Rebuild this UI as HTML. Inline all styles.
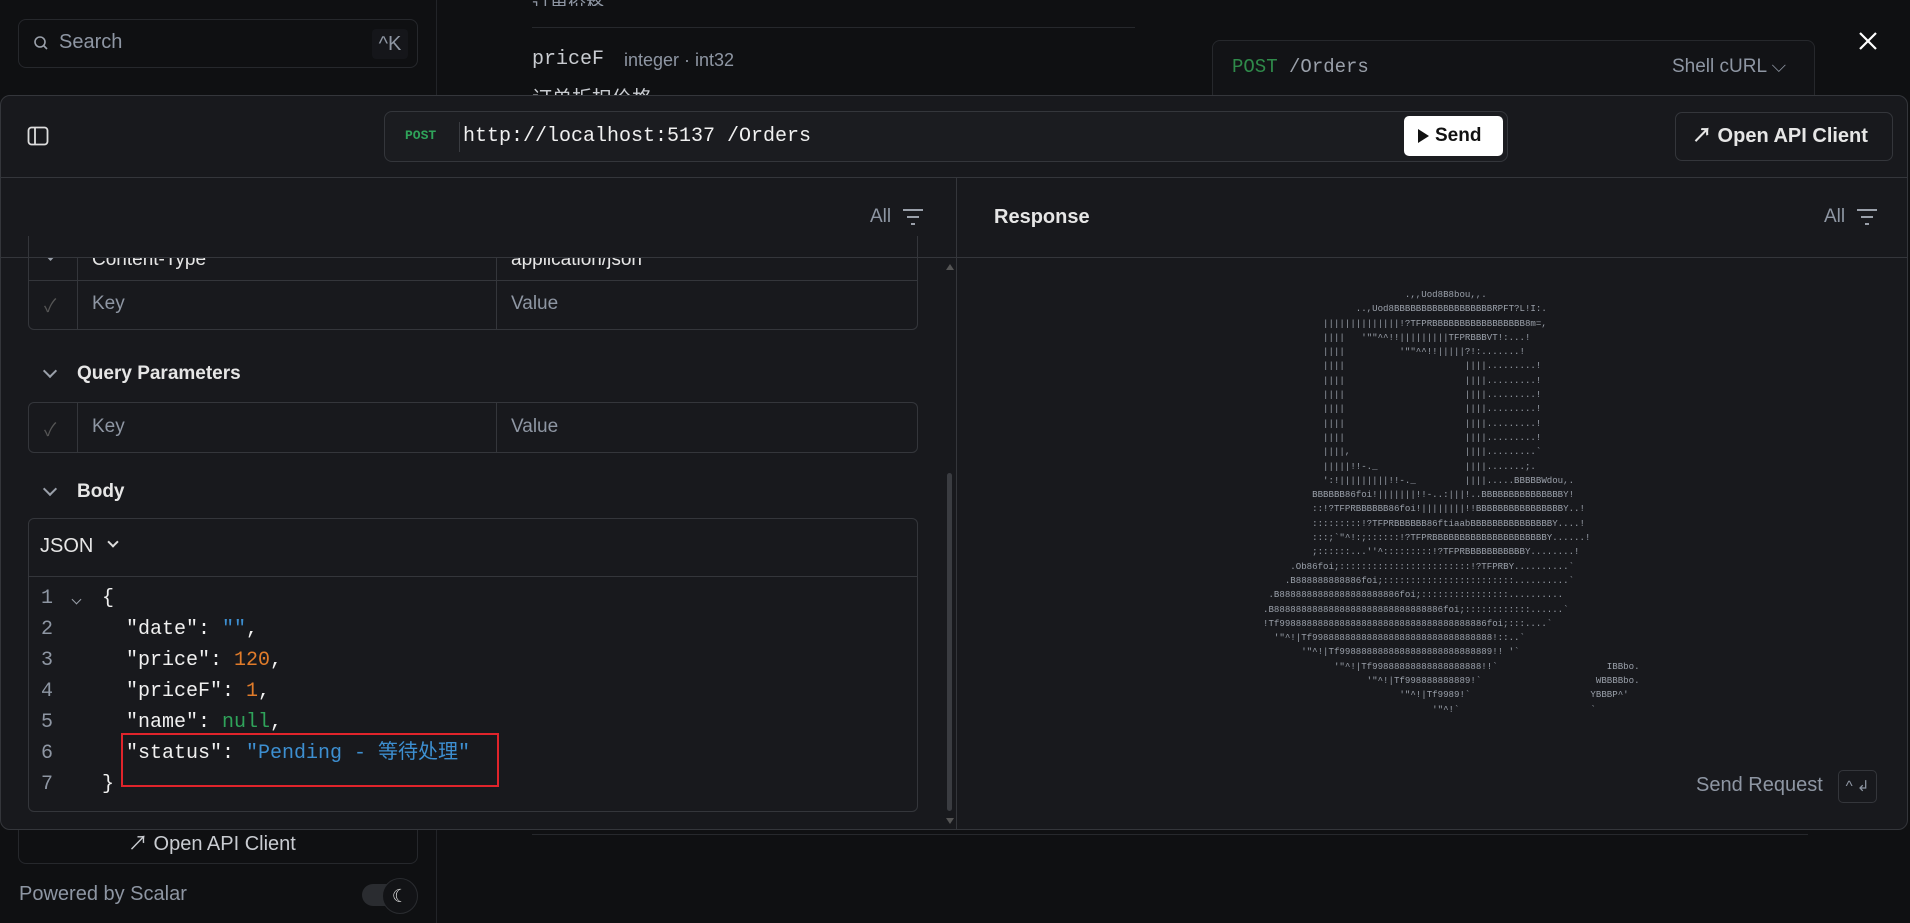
<!DOCTYPE html>
<html><head><meta charset="utf-8">
<style>
*{box-sizing:border-box;margin:0;padding:0}
body{width:1910px;height:923px;overflow:hidden;background:#0f1012;font-family:"Liberation Sans","Noto Sans CJK SC",sans-serif;color:#e6e6e6;position:relative}
.a{position:absolute}
.mono{font-family:"Liberation Mono","Noto Sans CJK SC",monospace}
.mut{color:#8e96a3}
.modal{left:0;top:95px;width:1908px;height:735px;background:#18191d;border:1px solid #34363b;border-radius:10px;overflow:hidden}
.tbl{border:1px solid #34363b;border-radius:6px}
.chev{width:10px;height:10px;border-right:2px solid #9aa0aa;border-bottom:2px solid #9aa0aa;transform:rotate(45deg)}
.code div{height:31px;line-height:31px;white-space:pre}
pre.art{font-family:"Liberation Mono",monospace;font-size:9.1px;line-height:14.3px;color:#9aa0aa}
</style></head><body>

<div class="a" style="left:0;top:0;width:437px;height:923px;border-right:1px solid #222428;background:#0f1012"></div>
<div class="a" style="left:18px;top:19px;width:400px;height:49px;border:1px solid #26282c;border-radius:8px"></div>
<svg class="a" style="left:33px;top:35px" width="16" height="16" viewBox="0 0 16 16"><circle cx="7" cy="7" r="5" fill="none" stroke="#9aa0aa" stroke-width="1.6"/><path d="M11 11l3 3" stroke="#9aa0aa" stroke-width="1.6"/></svg>
<div class="a mut" style="left:59px;top:31px;font-size:20px">Search</div>
<div class="a mut" style="left:372px;top:29px;width:36px;height:30px;background:#15161a;border-radius:4px;font-size:20px;text-align:center;line-height:30px">^K</div>
<div class="a" style="left:532px;top:27px;width:603px;height:1px;background:#26282c"></div>
<div class="a" style="left:532px;top:0;font-size:18px;color:#8e96a3;line-height:10px;height:6px;overflow:hidden">订单价格</div>
<div class="a mono" style="left:532px;top:48px;font-size:20px;color:#c9ccd1">priceF</div>
<div class="a mut" style="left:624px;top:50px;font-size:18px">integer · int32</div>
<div class="a" style="left:532px;top:82px;font-size:20px;color:#c9ccd1">订单折扣价格</div>
<div class="a" style="left:1212px;top:40px;width:603px;height:80px;border:1px solid #26282c;border-radius:8px;background:#121316"></div>
<div class="a mono" style="left:1232px;top:56px;font-size:19px"><span style="color:#2f8a4a">POST</span> <span style="color:#9aa0aa">/Orders</span></div>
<div class="a mut" style="left:1672px;top:56px;font-size:19px">Shell cURL ⌵</div>
<svg class="a" style="left:1857px;top:30px" width="22" height="22" viewBox="0 0 22 22"><path d="M3 3L19 19M19 3L3 19" stroke="#fff" stroke-width="2.2"/></svg>

<div class="a" style="left:18px;top:829px;width:400px;height:35px;border:1px solid #26282c;border-top:none;border-radius:0 0 8px 8px"></div>
<div class="a" style="left:128px;top:827px;font-size:20px;color:#c9ccd1">↗ Open API Client</div>
<div class="a mut" style="left:19px;top:883px;font-size:20px">Powered by Scalar</div>
<div class="a" style="left:362px;top:884px;width:40px;height:22px;background:#2a2c30;border-radius:11px"></div>
<div class="a" style="left:382px;top:878px;width:36px;height:36px;background:#121316;border:1px solid #2a2c30;border-radius:50%;color:#ddd;font-size:18px;text-align:center;line-height:34px">☾</div>
<div class="a" style="left:532px;top:834px;width:1276px;height:1px;background:#26282c"></div>

<div class="a modal">
 <svg class="a" style="left:26px;top:30px" width="22" height="20" viewBox="0 0 22 20"><rect x="1.5" y="1.5" width="19" height="17" rx="3" fill="none" stroke="#ddd" stroke-width="1.8"/><path d="M8 2v16" stroke="#ddd" stroke-width="1.8"/></svg>
 <div class="a" style="left:383px;top:15px;width:1124px;height:51px;border:1px solid #34363b;border-radius:8px;background:#1b1c20"></div>
 <div class="a mono" style="left:404px;top:32px;font-size:13px;font-weight:bold;color:#2fa35a">POST</div>
 <div class="a" style="left:458px;top:26px;width:1px;height:30px;background:#3a3c41"></div>
 <div class="a mono" style="left:462px;top:29px;font-size:20px;color:#f0f0f0">http://localhost:5137 /Orders</div>
 <div class="a" style="left:1403px;top:20px;width:99px;height:40px;background:#fff;border-radius:5px;color:#111;font-size:19px;font-weight:bold;line-height:40px"><span style="position:absolute;left:14px;top:13px;width:0;height:0;border-left:11px solid #111;border-top:7px solid transparent;border-bottom:7px solid transparent"></span><span style="position:absolute;left:31px">Send</span></div>
 <div class="a" style="left:1674px;top:16px;width:218px;height:49px;border:1px solid #34363b;border-radius:7px;font-size:20px;font-weight:bold;line-height:47px;padding-left:16px">↗ Open API Client</div>
 <div class="a" style="left:0;top:81px;width:1908px;height:1px;background:#34363b"></div>
 <div class="a" style="left:955px;top:82px;width:1px;height:653px;background:#34363b"></div>
 <div class="a mut" style="left:869px;top:110px;font-size:19px">All</div>
 <svg class="a" style="left:901px;top:112px" width="22" height="18" viewBox="0 0 22 18"><path d="M1 2h20M5 9h12M9 16h4" stroke="#9aa0aa" stroke-width="2"/></svg>
 <div class="a" style="left:0;top:161px;width:955px;height:1px;background:#34363b"></div>
 <div class="a tbl" style="left:27px;top:140px;width:890px;height:94px;border-top:none;border-radius:0 0 6px 6px;overflow:hidden"></div>
 <div class="a" style="left:27px;top:162px;width:890px;height:72px;overflow:hidden">
   <div class="a" style="left:49px;top:0;width:1px;height:72px;background:#34363b"></div>
   <div class="a" style="left:468px;top:0;width:1px;height:72px;background:#34363b"></div>
   <div class="a" style="left:0;top:22px;width:890px;height:1px;background:#34363b"></div>
   <div class="a" style="left:64px;top:-9px;font-size:19px">Content-Type</div>
   <div class="a" style="left:483px;top:-9px;font-size:19px">application/json</div>
   <div class="a" style="left:18px;top:-8px;width:9px;height:9px;border-right:2px solid #9aa0aa;border-bottom:2px solid #9aa0aa;transform:rotate(45deg)"></div>
   <div class="a" style="left:16px;top:34px;color:#555;font-size:18px">✓</div>
   <div class="a mut" style="left:64px;top:35px;font-size:19px">Key</div>
   <div class="a mut" style="left:483px;top:35px;font-size:19px">Value</div>
 </div>
 <div class="a chev" style="left:44px;top:270px"></div>
 <div class="a" style="left:76px;top:267px;font-size:19px;font-weight:bold">Query Parameters</div>
 <div class="a tbl" style="left:27px;top:306px;width:890px;height:51px">
   <div class="a" style="left:48px;top:0;width:1px;height:49px;background:#34363b"></div>
   <div class="a" style="left:467px;top:0;width:1px;height:49px;background:#34363b"></div>
   <div class="a" style="left:15px;top:13px;color:#555;font-size:18px">✓</div>
   <div class="a mut" style="left:63px;top:13px;font-size:19px">Key</div>
   <div class="a mut" style="left:482px;top:13px;font-size:19px">Value</div>
 </div>
 <div class="a chev" style="left:44px;top:388px"></div>
 <div class="a" style="left:76px;top:385px;font-size:19px;font-weight:bold">Body</div>
 <div class="a tbl" style="left:27px;top:422px;width:890px;height:294px">
   <div class="a" style="left:0;top:57px;width:888px;height:1px;background:#34363b"></div>
   <div class="a" style="left:11px;top:16px;font-size:20px">JSON</div>
   <div class="a" style="left:80px;top:19px;width:8px;height:8px;border-right:2px solid #ddd;border-bottom:2px solid #ddd;transform:rotate(45deg)"></div>
 </div>
 <div class="a mono code" style="left:40px;top:487px;font-size:20px;color:#8e96a3">
  <div>1</div><div>2</div><div>3</div><div>4</div><div>5</div><div>6</div><div>7</div>
 </div>
 <div class="a" style="left:72px;top:500px;width:7px;height:7px;border-right:1.5px solid #9aa0aa;border-bottom:1.5px solid #9aa0aa;transform:rotate(45deg)"></div>
 <div class="a mono code" style="left:101px;top:487px;font-size:20px;color:#f0f0f0">
  <div>{</div>
  <div>  "date": <span style="color:#3d8fd1">""</span>,</div>
  <div>  "price": <span style="color:#e07b2a">120</span>,</div>
  <div>  "priceF": <span style="color:#e07b2a">1</span>,</div>
  <div>  "name": <span style="color:#2fa35a">null</span>,</div>
  <div>  "status": <span style="color:#3d8fd1">"Pending - 等待处理"</span></div>
  <div>}</div>
 </div>
 <div class="a" style="left:120px;top:637px;width:378px;height:54px;border:2px solid #e0242b"></div>
 <div class="a" style="left:946px;top:377px;width:5px;height:338px;background:#3a3c41;border-radius:3px"></div>
 <div class="a" style="left:945px;top:168px;width:0;height:0;border-left:4px solid transparent;border-right:4px solid transparent;border-bottom:6px solid #555"></div>
 <div class="a" style="left:945px;top:722px;width:0;height:0;border-left:4px solid transparent;border-right:4px solid transparent;border-top:6px solid #555"></div>
 <div class="a" style="left:993px;top:110px;font-size:20px;font-weight:bold">Response</div>
 <div class="a mut" style="left:1823px;top:110px;font-size:19px">All</div>
 <svg class="a" style="left:1855px;top:112px" width="22" height="18" viewBox="0 0 22 18"><path d="M1 2h20M5 9h12M9 16h4" stroke="#9aa0aa" stroke-width="2"/></svg>
 <div class="a" style="left:956px;top:161px;width:952px;height:1px;background:#34363b"></div>
<pre class="a art" style="left:1262px;top:192px">                          .,,Uod8B8bou,,.
                 ..,Uod8BBBBBBBBBBBBBBBBBBRPFT?L!I:.
           ||||||||||||||!?TFPRBBBBBBBBBBBBBBBBB8m=,
           ||||   '""^^!!|||||||||TFPRBBBVT!:...!
           ||||          '""^^!!|||||?!:.......!
           ||||                      ||||.........!
           ||||                      ||||.........!
           ||||                      ||||.........!
           ||||                      ||||.........!
           ||||                      ||||.........!
           ||||                      ||||.........!
           ||||,                     ||||.........`
           |||||!!-._                ||||.......;.
           ':!|||||||||!!-._         ||||.....BBBBBWdou,.
         BBBBBB86foi!|||||||!!-..:|||!..BBBBBBBBBBBBBBBY!
         ::!?TFPRBBBBBB86foi!||||||||!!BBBBBBBBBBBBBBBBY..!
         :::::::::!?TFPRBBBBBB86ftiaabBBBBBBBBBBBBBBBY....!
         :::;`"^!:;::::::!?TFPRBBBBBBBBBBBBBBBBBBBBBY......!
         ;::::::...''^:::::::::!?TFPRBBBBBBBBBBBY........!
     .Ob86foi;::::::::::::::::::::::::!?TFPRBY..........`
    .B888888888886foi;::::::::::::::::::::::::..........`
 .B8888888888888888888886foi;::::::::::::::::..........
.B8888888888888888888888888888886foi;::::::::::::......`
!Tf99888888888888888888888888888888888886foi;:::....`
  '"^!|Tf998888888888888888888888888888888!::..`
       '"^!|Tf9988888888888888888888888889!! '`
             '"^!|Tf99888888888888888888!!`                    IBBbo.
                   '"^!|Tf998888888889!`                     WBBBBbo.
                         '"^!|Tf9989!`                      YBBBP^'
                               '"^!`                        `</pre>
 <div class="a mut" style="left:1695px;top:678px;font-size:20px">Send Request</div>
 <div class="a mut" style="left:1837px;top:674px;width:39px;height:33px;border:1px solid #34363b;border-radius:5px;font-size:15px;text-align:center;line-height:31px">^ ↲</div>
</div>
</body></html>
